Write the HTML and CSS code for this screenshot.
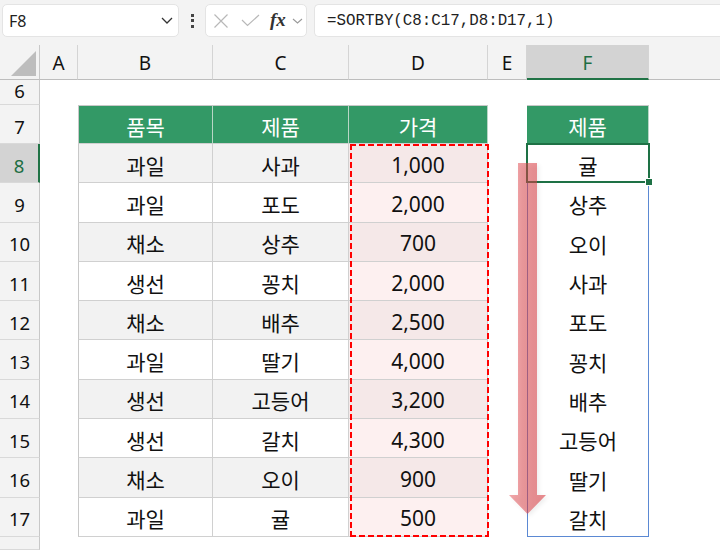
FILE: index.html
```html
<!DOCTYPE html>
<html lang="ko">
<head>
<meta charset="utf-8">
<link rel="stylesheet" href="styles.css">
</head>
<body>
<div class="formula-bar">
  <div class="name-box">
    <span>F8</span>
    <svg class="chev-dark" width="12" height="7" viewBox="0 0 12 7"><polyline points="1,1 6,6 11,1" fill="none" stroke="#333" stroke-width="1.3"/></svg>
  </div>
  <div class="dots"><i></i><i></i><i></i></div>
  <div class="fx-box">
    <svg width="16" height="16" viewBox="0 0 16 16"><path d="M1.5 1.5 L14.5 14.5 M14.5 1.5 L1.5 14.5" stroke="#b8b8b8" stroke-width="1.2" fill="none"/></svg>
    <svg width="19" height="13" viewBox="0 0 19 13"><polyline points="1,6 6.5,11.5 18,1" stroke="#b8b8b8" stroke-width="1.2" fill="none"/></svg>
    <span class="fx">fx</span>
    <svg width="11" height="6" viewBox="0 0 11 6"><polyline points="1,1 5.5,5 10,1" fill="none" stroke="#9a9a9a" stroke-width="1.1"/></svg>
  </div>
  <div class="formula">=SORTBY(C8:C17,D8:D17,1)</div>
</div>

<div class="sheet">
  <div class="row r0">
    <div class="rh corner"></div>
    <div class="ch cA">A</div>
    <div class="ch cB">B</div>
    <div class="ch cC">C</div>
    <div class="ch cD">D</div>
    <div class="ch cE">E</div>
    <div class="ch cF sel-col">F</div>
    <div class="ch cG"></div>
  </div>
  <div class="row r6">
    <div class="rh rh6">6</div>
  </div>
  <div class="row r7">
    <div class="rh">7</div>
    <div class="tc th cB first top">품목</div>
    <div class="tc th cC top">제품</div>
    <div class="tc th cD top">가격</div>
    <div class="tc th cF top">제품</div>
  </div>
  <div class="row r8">
    <div class="rh sel-row">8</div>
    <div class="tc cB first band">과일</div>
    <div class="tc cC band">사과</div>
    <div class="tc cD pk1">1,000</div>
    <div class="fc cF">귤</div>
  </div>
  <div class="row r9">
    <div class="rh">9</div>
    <div class="tc cB first">과일</div>
    <div class="tc cC">포도</div>
    <div class="tc cD pk2">2,000</div>
    <div class="fc cF">상추</div>
  </div>
  <div class="row r10">
    <div class="rh">10</div>
    <div class="tc cB first band">채소</div>
    <div class="tc cC band">상추</div>
    <div class="tc cD pk1">700</div>
    <div class="fc cF">오이</div>
  </div>
  <div class="row r11">
    <div class="rh">11</div>
    <div class="tc cB first">생선</div>
    <div class="tc cC">꽁치</div>
    <div class="tc cD pk2">2,000</div>
    <div class="fc cF">사과</div>
  </div>
  <div class="row r12">
    <div class="rh">12</div>
    <div class="tc cB first band">채소</div>
    <div class="tc cC band">배추</div>
    <div class="tc cD pk1">2,500</div>
    <div class="fc cF">포도</div>
  </div>
  <div class="row r13">
    <div class="rh">13</div>
    <div class="tc cB first">과일</div>
    <div class="tc cC">딸기</div>
    <div class="tc cD pk2">4,000</div>
    <div class="fc cF">꽁치</div>
  </div>
  <div class="row r14">
    <div class="rh">14</div>
    <div class="tc cB first band">생선</div>
    <div class="tc cC band">고등어</div>
    <div class="tc cD pk1">3,200</div>
    <div class="fc cF">배추</div>
  </div>
  <div class="row r15">
    <div class="rh">15</div>
    <div class="tc cB first">생선</div>
    <div class="tc cC">갈치</div>
    <div class="tc cD pk2">4,300</div>
    <div class="fc cF">고등어</div>
  </div>
  <div class="row r16">
    <div class="rh">16</div>
    <div class="tc cB first band">채소</div>
    <div class="tc cC band">오이</div>
    <div class="tc cD pk1">900</div>
    <div class="fc cF">딸기</div>
  </div>
  <div class="row r17">
    <div class="rh">17</div>
    <div class="tc cB first">과일</div>
    <div class="tc cC">귤</div>
    <div class="tc cD pk2">500</div>
    <div class="fc cF">갈치</div>
  </div>
  <div class="row r18">
    <div class="rh"></div>
  </div>

  <div class="dash-range"></div>
  <div class="spill-range"></div>
  <div class="active-cell"><span class="handle"></span></div>

  <svg class="arrow" width="56" height="370" viewBox="0 0 56 370">
    <defs>
      <linearGradient id="ag" x1="0" y1="0" x2="1" y2="0">
        <stop offset="0" stop-color="#e0474d" stop-opacity="0.48"/>
        <stop offset="1" stop-color="#d93c42" stop-opacity="0.6"/>
      </linearGradient>
    </defs>
    <path d="M18 8 H37 V340 H46 L27.5 359 L9 340 H18 Z" fill="url(#ag)"/>
  </svg>
</div>
</body>
</html>
```

FILE: styles.css
```css
html, body {
  margin: 0;
  padding: 0;
}

body {
  width: 720px;
  height: 550px;
  overflow: hidden;
  background: #ffffff;
  font-family: "Noto Sans", "Noto Sans CJK KR", sans-serif;
  color: #111;
}

/* ---------- formula bar ---------- */
.formula-bar {
  height: 45px;
  box-sizing: border-box;
  padding-top: 4px;
  background: #f3f3f3;
  display: flex;
  align-items: flex-start;
}

.name-box {
  margin-left: 2px;
  width: 177px;
  height: 33px;
  box-sizing: border-box;
  background: #fff;
  border: 1px solid #e4e4e4;
  border-radius: 5px;
  display: flex;
  align-items: center;
  justify-content: space-between;
  padding: 0 5px 0 6px;
  font-size: 16px;
  color: #222;
}

.dots {
  width: 26px;
  height: 33px;
  display: flex;
  flex-direction: column;
  align-items: center;
  justify-content: center;
  gap: 2.5px;
}

.dots i {
  display: block;
  width: 3px;
  height: 3px;
  background: #444;
}

.fx-box {
  width: 102px;
  height: 33px;
  box-sizing: border-box;
  background: #fff;
  border: 1px solid #e4e4e4;
  border-radius: 5px;
  display: flex;
  align-items: center;
  padding-left: 7px;
  gap: 0;
}

.fx-box svg:nth-child(1) { margin-right: 12px; }
.fx-box svg:nth-child(2) { margin-right: 10px; }

.fx {
  font-family: "Liberation Serif", serif;
  font-style: italic;
  font-weight: bold;
  font-size: 19px;
  color: #333;
  margin-right: 6px;
  margin-top: -2px;
}

.formula {
  flex: 1;
  margin-left: 7px;
  height: 33px;
  box-sizing: border-box;
  background: #fff;
  border: 1px solid #e4e4e4;
  border-right: none;
  border-radius: 5px 0 0 5px;
  padding-left: 12px;
  display: flex;
  align-items: center;
  font-family: "Liberation Mono", monospace;
  font-size: 15.8px;
  color: #222;
}

/* ---------- sheet grid ---------- */
.sheet {
  position: relative;
  height: 505px;
  display: grid;
  grid-template-columns: 40px 38px 135px 136px 139px 39px 122px 1fr;
  grid-template-rows: 35px 25px 39px repeat(10, 39.3px) 1fr;
}

.row { display: contents; }

.r0 > * { grid-row: 1; }
.r6 > * { grid-row: 2; }
.r7 > * { grid-row: 3; }
.r8 > * { grid-row: 4; }
.r9 > * { grid-row: 5; }
.r10 > * { grid-row: 6; }
.r11 > * { grid-row: 7; }
.r12 > * { grid-row: 8; }
.r13 > * { grid-row: 9; }
.r14 > * { grid-row: 10; }
.r15 > * { grid-row: 11; }
.r16 > * { grid-row: 12; }
.r17 > * { grid-row: 13; }
.r18 > * { grid-row: 14; }

.rh { grid-column: 1; }
.cA { grid-column: 2; }
.cB { grid-column: 3; }
.cC { grid-column: 4; }
.cD { grid-column: 5; }
.cE { grid-column: 6; }
.cF { grid-column: 7; }
.cG { grid-column: 8; }

/* row headers */
.rh {
  background: #f3f3f3;
  border-right: 1px solid #c8c8c8;
  border-bottom: 1px solid #d9d9d9;
  box-sizing: border-box;
  display: flex;
  align-items: center;
  justify-content: center;
  padding-top: 4px;
  font-size: 18.5px;
  color: #111;
}

.rh6 {
  padding-top: 0;
  padding-bottom: 3px;
}

.corner {
  position: relative;
  border-bottom: 1px solid #bdbdbd;
}

.corner::after {
  content: "";
  position: absolute;
  right: 3px;
  bottom: 3px;
  width: 25px;
  height: 25px;
  background: #bdbdbd;
  clip-path: polygon(100% 0, 100% 100%, 0 100%);
}

/* column headers */
.ch {
  background: #f3f3f3;
  border-right: 1px solid #d4d4d4;
  border-bottom: 1px solid #bdbdbd;
  box-sizing: border-box;
  display: flex;
  align-items: center;
  justify-content: center;
  padding-top: 2px;
  font-size: 19px;
  color: #111;
}

.ch.cG { border-right: none; }

.sel-col {
  background: #d3d3d3;
  color: #1e6e43;
  border-bottom: 2px solid #217346;
}

.sel-row {
  background: #d3d3d3;
  color: #1e6e43;
  border-right: 2px solid #217346;
}

/* table cells */
.tc {
  border-right: 1px solid #d0d0d0;
  border-bottom: 1px solid #d0d0d0;
  box-sizing: border-box;
  display: flex;
  align-items: center;
  justify-content: center;
  padding-top: 3px;
  font-size: 21px;
  color: #111;
}

.tc.first { border-left: 1px solid #c8c8c8; }
.tc.top { border-top: 1px solid #c8c8c8; }

.th {
  background: #339966;
  color: #ffffff;
  border-right-color: #b9d6c6;
}

.band { background: #f2f2f2; }
.pk1 { background: #f5e8e8; }
.pk2 { background: #fdf0f0; }

.fc {
  display: flex;
  align-items: center;
  justify-content: center;
  padding-top: 3px;
  font-size: 21px;
  color: #111;
}

/* overlays placed on the grid */
.dash-range {
  grid-column: 5;
  grid-row: 4 / 14;
  margin: 0 -1px 0 1px;
  pointer-events: none;
  background:
    repeating-linear-gradient(90deg, #ff0000 0 6px, transparent 6px 9px) left top / 100% 2px no-repeat,
    repeating-linear-gradient(90deg, #ff0000 0 6px, transparent 6px 9px) left bottom / 100% 2px no-repeat,
    repeating-linear-gradient(180deg, #ff0000 0 6px, transparent 6px 9px) left top / 2px 100% no-repeat,
    repeating-linear-gradient(180deg, #ff0000 0 6px, transparent 6px 9px) right top / 2px 100% no-repeat;
}

.spill-range {
  grid-column: 7;
  grid-row: 4 / 14;
  border: 1px solid #5b89d3;
  pointer-events: none;
}

.active-cell {
  grid-column: 7;
  grid-row: 4;
  margin: -1px -1px 0 -1px;
  border: 2px solid #1e7145;
  position: relative;
  pointer-events: none;
}

.handle {
  position: absolute;
  right: -5px;
  bottom: -5px;
  width: 6px;
  height: 6px;
  background: #1e7145;
  border: 1px solid #ffffff;
}

.arrow {
  position: absolute;
  left: 500px;
  top: 110px;
  filter: drop-shadow(2px 2px 2px rgba(0, 0, 0, 0.12));
}
```
